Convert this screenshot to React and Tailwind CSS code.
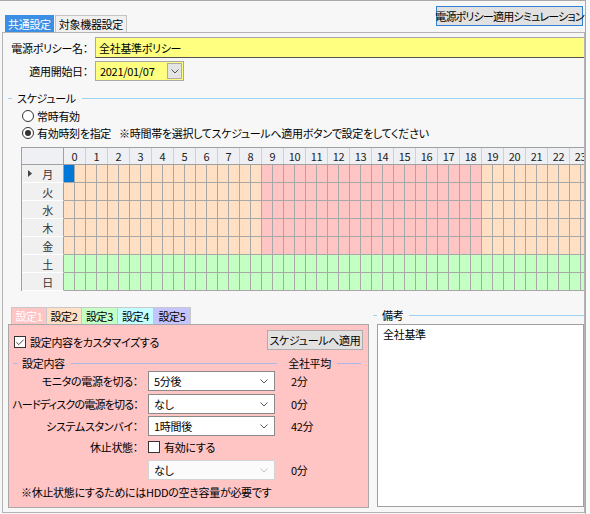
import { Check } from 'lucide-react';

const DAYS = ['月', '火', '水', '木', '金', '土', '日'];
const HOURS = Array.from({ length: 24 }, (_, i) => i);
const HALVES = Array.from({ length: 48 }, (_, i) => i);

function cellColor(r, c) {
  if (r === 0 && c === 0) return 'bg-[#0078d7]';
  if (r >= 5) return 'bg-[#c4ffc4]';
  const h = Math.floor(c / 2);
  return h >= 9 && h <= 18 ? 'bg-[#ffc4c4]' : 'bg-[#ffe0c4]';
}

function Chevron({ className = 'stroke-[#555]' }) {
  return (
    <svg width="8" height="5" viewBox="0 0 8 5" className={className} fill="none" strokeWidth="1">
      <path d="M0.5 0.5l3.5 3.5 3.5-3.5" />
    </svg>
  );
}

function GroupLabel({ label, line, className = '' }) {
  return (
    <div className={`flex items-center h-[16px] ${className}`}>
      <span className={`w-[4px] h-px ${line}`} />
      <span className="ml-[5px] leading-[16px]">{label}</span>
      <span className={`flex-1 h-px ml-[6px] ${line}`} />
    </div>
  );
}

function Radio({ checked, children }) {
  return (
    <div className="flex items-center h-[16px] ml-[19px]">
      <span className="w-[12px] h-[12px] shrink-0 rounded-full border border-[#333] bg-white flex items-center justify-center">
        {checked && <span className="w-[6px] h-[6px] rounded-full bg-[#333]" />}
      </span>
      <span className="ml-[3px] leading-[16px]">{children}</span>
    </div>
  );
}

function CheckBox({ checked }) {
  return (
    <span className="w-[12px] h-[12px] shrink-0 border border-[#333] bg-white flex items-center justify-center">
      {checked && <Check size={11} strokeWidth={2} className="text-[#222]" />}
    </span>
  );
}

function Select({ value, disabled }) {
  return (
    <div className={`w-[127px] h-[20px] border flex items-center justify-between pl-[5px] pr-[6px] ${disabled ? 'border-[#d4d4d4] bg-[#fbfbfb]' : 'border-[#8a8a8a] bg-white'}`}>
      <span className="leading-[16px]">{value}</span>
      <Chevron className={disabled ? 'stroke-[#c4c4c4]' : 'stroke-[#555]'} />
    </div>
  );
}

function Label({ children, className = '' }) {
  return <span className={`w-[129px] shrink-0 flex justify-end leading-[16px] ${className}`}>{children}</span>;
}

function SettingRow({ label, value, avg, className = '', labelClass = '' }) {
  return (
    <div className={`flex items-center h-[20px] ${className}`}>
      <Label className={labelClass}>{label}</Label>
      <div className="ml-[10px]">
        <Select value={value} />
      </div>
      <span className="ml-[16px] leading-[16px]">{avg}</span>
    </div>
  );
}

function ScheduleGrid() {
  return (
    <div className="ml-[18px] mt-[6px] border-l border-t border-[#a0a0a0] w-max text-[#222]">
      <div className="flex h-[17px] bg-[#eef0f3] border-b border-[#a0a0a0]">
        <div className="w-[42px] border-r border-[#a0a0a0] bg-[#eef0f3]" />
        {HOURS.map(h => (
          <div key={h} className="w-[22px] border-r border-[#cdd0d4] flex items-center justify-center leading-[16px]">{h}</div>
        ))}
      </div>
      {DAYS.map((d, r) => (
        <div key={d} className="flex h-[18px]">
          <div className="w-[42px] flex items-center bg-[#f0f0f0] border-r border-[#a0a0a0] border-b border-b-white">
            <span className="w-[10px] flex justify-end">
              {r === 0 && (
                <svg width="4" height="7" viewBox="0 0 4 7" className="fill-[#444]"><path d="M0 0l4 3.5L0 7z" /></svg>
              )}
            </span>
            <span className="flex-1 text-center leading-[16px] text-[#333]">{d}</span>
          </div>
          {HALVES.map(c => (
            <div key={c} className={`w-[11px] border-r border-b border-[#a8a8a8] ${cellColor(r, c)}`} />
          ))}
        </div>
      ))}
    </div>
  );
}

export default function App() {
  return (
    <div className="w-[590px] h-[514px] bg-[#fafafa] overflow-hidden whitespace-nowrap font-['Noto_Sans_CJK_JP',sans-serif] [font-feature-settings:'palt'] text-[11px] tracking-[-0.3px] text-black">
      <div className="w-[586px] h-[514px] border-t border-r border-[#a8a8a8] bg-[#f7f7f7] flex flex-col">
        {/* header: tabs + simulation button */}
        <div className="h-[31px] flex justify-between">
          <div className="flex items-end ml-[5px]">
            <div className="h-[17px] px-[3px] bg-[#3d8fe6] text-white flex items-center leading-[16px]">共通設定</div>
            <div className="h-[17px] px-[3px] ml-px bg-[#f0f0f0] border border-b-0 border-[#c4c4c4] flex items-center leading-[16px]">対象機器設定</div>
          </div>
          <button className="mt-[5px] mr-[2px] h-[20px] w-[147px] border border-[#2f82d6] bg-[#e1e1e1] flex items-center justify-center leading-[16px] tracking-[-0.8px]">
            電源ポリシー適用シミュレーション
          </button>
        </div>

        {/* main panel */}
        <div className="flex-1 ml-[2px] mb-[1px] border border-[#b4b4b4] bg-[#f7f7f7] overflow-hidden flex flex-col">
          <div className="flex items-center h-[21px] mt-[4px]">
            <span className="w-[85px] shrink-0 flex justify-end leading-[16px]">電源ポリシー名：</span>
            <div className="ml-[7px] flex-1 h-[21px] bg-[#ffff80] border-l border-t border-[#a8a8a8] border-b border-b-[#555] flex items-center pl-[3px] leading-[16px]">全社基準ポリシー</div>
          </div>
          <div className="flex items-center h-[20px] mt-[3px]">
            <span className="w-[85px] shrink-0 flex justify-end leading-[16px]">適用開始日：</span>
            <div className="ml-[7px] w-[89px] h-[20px] bg-[#ffff80] border border-[#a8a8a8] flex items-center justify-between pl-[4px] pr-px">
              <span className="leading-[16px]">2021/01/07</span>
              <span className="w-[15px] h-[16px] bg-[#e4e4e4] border border-[#acacac] flex items-center justify-center">
                <Chevron />
              </span>
            </div>
          </div>

          <GroupLabel label="スケジュール" line="bg-[#9fd1f2]" className="mt-[9px] ml-[5px]" />
          <div className="mt-[2px]"><Radio>常時有効</Radio></div>
          <div className="mt-px">
            <Radio checked>
              有効時刻を指定<span className="ml-[8px]">※時間帯を選択してスケジュールへ適用ボタンで設定をしてください</span>
            </Radio>
          </div>

          <ScheduleGrid />

          {/* bottom: settings tabs + notes */}
          <div className="flex mt-[16px] ml-[5px]">
            <div className="w-[361px] shrink-0 flex flex-col">
              <div className="flex ml-[3px] h-[17px]">
                <div className="w-[36px] bg-[#ffc4c4] text-white border border-b-0 border-[#c8c8c8] flex items-center justify-center leading-[16px]">設定1</div>
                <div className="w-[35px] bg-[#ffe0c4] border-t border-r border-[#c8c8c8] flex items-center justify-center leading-[16px]">設定2</div>
                <div className="w-[36px] bg-[#c4ffc4] border-t border-r border-[#c8c8c8] flex items-center justify-center leading-[16px]">設定3</div>
                <div className="w-[36px] bg-[#c4ffff] border-t border-r border-[#c8c8c8] flex items-center justify-center leading-[16px]">設定4</div>
                <div className="w-[37px] bg-[#c4c4ff] border-t border-r border-[#c8c8c8] flex items-center justify-center leading-[16px]">設定5</div>
              </div>
              <div className="h-[184px] bg-[#ffc4c4] border border-[#a8a8a8] flex flex-col">
                <div className="flex items-center justify-between h-[20px] mt-[5px] ml-[5px] mr-[5px]">
                  <div className="flex items-center mt-[4px]">
                    <CheckBox checked />
                    <span className="ml-[4px] leading-[16px]">設定内容をカスタマイズする</span>
                  </div>
                  <button className="h-[20px] w-[96px] bg-[#e1e1e1] border border-[#adadad] flex items-center justify-center leading-[16px]">スケジュールへ適用</button>
                </div>

                <div className="flex items-center h-[16px] mt-[5px] ml-[4px] mr-[7px]">
                  <span className="w-[4px] h-px bg-[#a9b9e6]" />
                  <span className="ml-[5px] leading-[16px]">設定内容</span>
                  <span className="flex-1 h-px ml-[6px] bg-[#a9b9e6]" />
                  <span className="ml-[11px] leading-[16px]">全社平均</span>
                  <span className="w-[24px] h-px ml-[6px] bg-[#a9b9e6]" />
                </div>

                <SettingRow label="モニタの電源を切る：" value="5分後" avg="2分" />
                <SettingRow label="ハードディスクの電源を切る：" value="なし" avg="0分" className="mt-[3px]" labelClass="tracking-[-0.8px]" />
                <SettingRow label="システムスタンバイ：" value="1時間後" avg="42分" className="mt-[2px]" />

                <div className="flex items-center h-[16px] mt-[3px]">
                  <Label>休止状態：</Label>
                  <span className="ml-[10px]"><CheckBox /></span>
                  <span className="ml-[4px] leading-[16px]">有効にする</span>
                </div>
                <div className="flex items-center h-[20px] mt-[5px]">
                  <div className="ml-[139px]"><Select value="なし" disabled /></div>
                  <span className="ml-[16px] leading-[16px]">0分</span>
                </div>
                <div className="mt-[4px] ml-[12px] leading-[16px]">※休止状態にするためにはHDDの空き容量が必要です</div>
              </div>
            </div>

            <div className="flex-1 ml-[4px] flex flex-col">
              <GroupLabel label="備考" line="bg-[#9fd1f2]" />
              <div className="ml-[4px] mt-px h-[183px] bg-white border border-[#a0a0a0] pl-[5px] pt-px leading-[16px]">全社基準</div>
            </div>
          </div>
        </div>
      </div>
    </div>
  );
}
